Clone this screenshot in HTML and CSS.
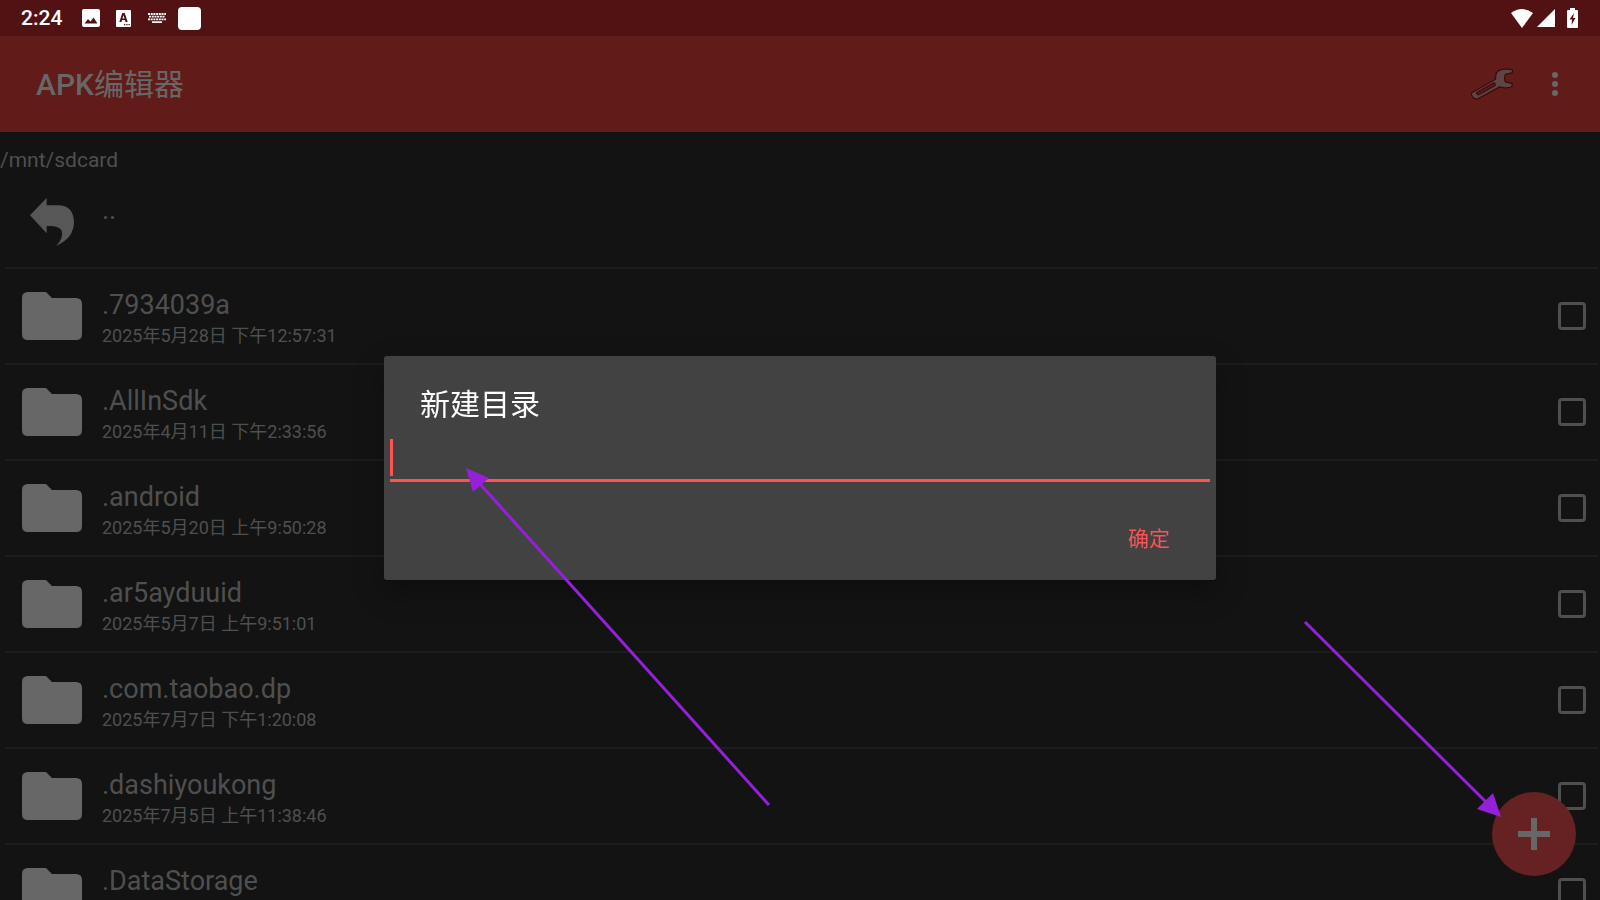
FILE: index.html
```html
<!DOCTYPE html>
<html lang="zh-CN">
<head>
  <meta charset="UTF-8" />
  <meta name="viewport" content="width=device-width, initial-scale=1.0"/>
  <title>APK编辑器</title>
  <link rel="stylesheet" href="styles.css">
</head>
<body>
  <svg class="symbols" aria-hidden="true">
    <symbol id="folder" viewBox="0 0 60 48">
      <path d="M6 0H24L30 6H54Q60 6 60 12V42Q60 48 54 48H6Q0 48 0 42V6Q0 0 6 0Z"/>
    </symbol>
  </svg>

  <div class="status-bar">
    <span class="clock">2:24</span>
    <svg class="icon-image" viewBox="0 0 18 18"><path fill-rule="evenodd" d="M2 0H16Q18 0 18 2V16Q18 18 16 18H2Q0 18 0 16V2Q0 0 2 0ZM2.500 14.500H15.500L11.500 8.500L8.500 12.500L6 10Z"/></svg>
    <svg class="icon-lang" viewBox="0 0 16 17"><path fill-rule="evenodd" d="M2 0H14Q15 0 15 1V16Q15 17 14 17H1Q0 17 0 16V1Q0 0 1 0ZM6.300 3L3.300 12H5.500L6 10H9L9.500 12H11.700L8.700 3ZM7.500 5.300L8.500 8.500H6.500ZM8 14V15.300H9.300V14ZM10.300 14V15.300H11.600V14ZM12.500 14V15.300H13.800V14Z"/></svg>
    <svg class="icon-keyboard" viewBox="0 0 20 12"><path d="M1 2H19M2 4.700H18M1 7.400H19" fill="none" stroke="#fff" stroke-width="1.800" stroke-dasharray="2 .7"/><path d="M5 9.300H15V11H5Z"/></svg>
    <span class="app-square"></span>
    <div class="system-icons">
      <svg class="icon-wifi" viewBox="0 0 22 19"><path d="M0 4Q11-4 22 4L11 19Z"/></svg>
      <svg class="icon-signal" viewBox="0 0 18 18"><path d="M18 0V18H0Z"/></svg>
      <svg class="icon-battery" viewBox="0 0 11 20"><path fill-rule="evenodd" d="M3 0H8V2H10Q11 2 11 3V19Q11 20 10 20H1Q0 20 0 19V3Q0 2 1 2H3ZM7 5L2.500 11.500H5L4.500 17L8.500 10H6Z"/></svg>
    </div>
  </div>

  <header class="toolbar">
    <h1>APK<span>编辑器</span></h1>
    <button class="tool-button" aria-label="设置">
      <svg class="icon-wrench" viewBox="0 0 132 100"><path d="M5 75L77 34Q75 14 88 7Q102 1 128 5V14L107 19Q101 30 107 42L127 47V56Q110 64 90 57L24 93Q12 97 6 86Q2 80 5 75ZM20 74Q18 80 25 81L75 53Q77 44 71 45Z"/></svg>
    </button>
    <button class="menu-button" aria-label="更多选项"><i></i><i></i><i></i></button>
  </header>

  <main>
    <div class="path">/mnt/sdcard</div>
    <ul class="files">
      <li>
        <svg class="icon-back" viewBox="0 0 132 144"><path d="M0 52L50 0V22H88Q130 24 132 72Q132 120 79 143Q102 118 95 98Q88 82 50 84V106Z"/></svg>
        <span class="parent">..</span>
      </li>
      <li>
        <svg class="folder"><use href="#folder"/></svg>
        <label for="f1"><span class="name">.7934039a</span><span class="date">2025年5月28日 下午12:57:31</span></label>
        <input type="checkbox" id="f1">
      </li>
      <li>
        <svg class="folder"><use href="#folder"/></svg>
        <label for="f2"><span class="name">.AllInSdk</span><span class="date">2025年4月11日 下午2:33:56</span></label>
        <input type="checkbox" id="f2">
      </li>
      <li>
        <svg class="folder"><use href="#folder"/></svg>
        <label for="f3"><span class="name">.android</span><span class="date">2025年5月20日 上午9:50:28</span></label>
        <input type="checkbox" id="f3">
      </li>
      <li>
        <svg class="folder"><use href="#folder"/></svg>
        <label for="f4"><span class="name">.ar5ayduuid</span><span class="date">2025年5月7日 上午9:51:01</span></label>
        <input type="checkbox" id="f4">
      </li>
      <li>
        <svg class="folder"><use href="#folder"/></svg>
        <label for="f5"><span class="name">.com.taobao.dp</span><span class="date">2025年7月7日 下午1:20:08</span></label>
        <input type="checkbox" id="f5">
      </li>
      <li>
        <svg class="folder"><use href="#folder"/></svg>
        <label for="f6"><span class="name">.dashiyoukong</span><span class="date">2025年7月5日 上午11:38:46</span></label>
        <input type="checkbox" id="f6">
      </li>
      <li>
        <svg class="folder"><use href="#folder"/></svg>
        <label for="f7"><span class="name">.DataStorage</span></label>
        <input type="checkbox" id="f7">
      </li>
    </ul>
  </main>

  <button class="fab" aria-label="新建"><svg viewBox="0 0 32 32"><path d="M13 0H19V13H32V19H19V32H13V19H0V13H13Z"/></svg></button>

  <div class="overlay">
    <form class="dialog" role="dialog" aria-labelledby="dialog-title">
      <h2 id="dialog-title">新建目录</h2>
      <div class="field">
        <span class="caret"></span>
        <input type="text" aria-labelledby="dialog-title">
      </div>
      <button type="button" class="ok">确定</button>
    </form>
  </div>

  <svg class="arrows" viewBox="0 0 1600 900">
    <path class="line" d="M769 805L480 484M1305 622L1486 802"/>
    <path d="M466 468L489 478L473 492ZM1501 817L1477 809L1493 793Z"/>
  </svg>
</body>
</html>
```
FILE: styles.css
```css
* {
  box-sizing: border-box;
}
body {
  margin: 0;
  height: 100vh;
  overflow: hidden;
  background: #131313;
  color: #4f4f4f;
  font-family: Roboto, "Noto Sans CJK SC", sans-serif;
}
button {
  padding: 0;
  border: 0;
  background: none;
  font-family: inherit;
}
svg {
  display: block;
  flex: none;
}
.symbols {
  position: absolute;
  width: 0;
  height: 0;
}

/* status bar */
.status-bar {
  display: flex;
  align-items: center;
  height: 36px;
  padding: 0 22px 0 21px;
  background: #521214;
  color: #fff;
  fill: #fff;
}
.clock {
  font-size: 21px;
  font-weight: 500;
  line-height: 36px;
  margin-right: 20px;
}
.icon-image {
  width: 18px;
  height: 18px;
  margin-right: 16px;
}
.icon-lang {
  width: 16px;
  height: 17px;
  margin-right: 15px;
}
.icon-keyboard {
  width: 20px;
  height: 12px;
  margin-right: 11px;
}
.app-square {
  width: 23px;
  height: 23px;
  border-radius: 4px;
  background: #fff;
}
.system-icons {
  display: flex;
  align-items: center;
  margin-left: auto;
}
.icon-wifi {
  width: 22px;
  height: 19px;
  margin-right: 4px;
}
.icon-signal {
  width: 18px;
  height: 18px;
  margin-right: 12px;
}
.icon-battery {
  width: 11px;
  height: 20px;
}

/* toolbar */
.toolbar {
  display: flex;
  align-items: center;
  height: 96px;
  padding: 0 36px;
  background: #611b19;
}
h1 {
  margin: 0 auto 0 0;
  padding-bottom: 4px;
  color: #676767;
  font-size: 30px;
  font-weight: 500;
}
h1 span {
  font-weight: 400;
}
.icon-wrench {
  width: 44px;
  height: 33px;
  fill: #5f4646;
  stroke: #3c0c0e;
  stroke-width: 4;
}
.menu-button {
  display: grid;
  gap: 3px;
  margin: 0 6px 0 38px;
}
.menu-button i {
  width: 6px;
  height: 6px;
  border-radius: 50%;
  background: #676767;
}

/* file list */
.path {
  height: 41px;
  padding-top: 16px;
  font-size: 21px;
  line-height: 24px;
}
.files {
  margin: 0 2px 0 5px;
  padding: 0;
  list-style: none;
}
.files li {
  display: flex;
  align-items: center;
  height: 96px;
  padding: 0 12px 0 17px;
  border-bottom: 2px solid #1d1d1d;
}
.folder {
  width: 60px;
  height: 48px;
  fill: #676767;
}
.icon-back {
  width: 44px;
  height: 48px;
  margin: 4px 8px 0;
  fill: #575757;
}
.parent {
  height: 52px;
  margin-left: 20px;
  font-size: 27px;
  line-height: 32px;
}
.files label {
  display: grid;
  align-self: flex-start;
  margin: 18px auto 0 20px;
}
.name {
  font-size: 27px;
  line-height: 36px;
}
.date {
  font-size: 18px;
  line-height: 26px;
}
.files input {
  appearance: none;
  width: 28px;
  height: 28px;
  margin: 0;
  border: 3px solid #4f4f4f;
  border-radius: 4px;
}

.fab {
  position: fixed;
  right: 24px;
  bottom: 24px;
  display: grid;
  place-items: center;
  width: 84px;
  height: 84px;
  border-radius: 50%;
  background: #662222;
}
.fab svg {
  width: 32px;
  height: 32px;
  fill: #676767;
}

/* new folder dialog */
.overlay {
  position: fixed;
  inset: 36px 0 0;
  display: grid;
  place-items: center;
}
.dialog {
  display: flex;
  flex-direction: column;
  width: 52%;
  padding: 27px 6px 19px;
  border-radius: 3px;
  background: #424242;
  box-shadow: 0 12px 32px rgba(0, 0, 0, 0.3);
}
h2 {
  margin: 0 30px;
  color: #fff;
  font-size: 30px;
  font-weight: 400;
  line-height: 44px;
}
.field {
  display: flex;
  height: 55px;
  padding: 12px 0 3px;
  border-bottom: 3px solid #ff5252;
}
.caret {
  width: 3px;
  background: #ff5252;
}
.field input {
  flex: 1;
  min-width: 0;
  padding: 0;
  border: 0;
  outline: 0;
  background: none;
  color: #fff;
  font: inherit;
  font-size: 27px;
}
.ok {
  align-self: flex-end;
  height: 48px;
  margin: 31px 40px 0 0;
  color: #ff5252;
  font-size: 21px;
}

.arrows {
  position: fixed;
  inset: 0;
  width: 100%;
  height: 100%;
  fill: #9420d8;
  pointer-events: none;
}
.line {
  stroke: #9420d8;
  stroke-width: 3;
}
```
